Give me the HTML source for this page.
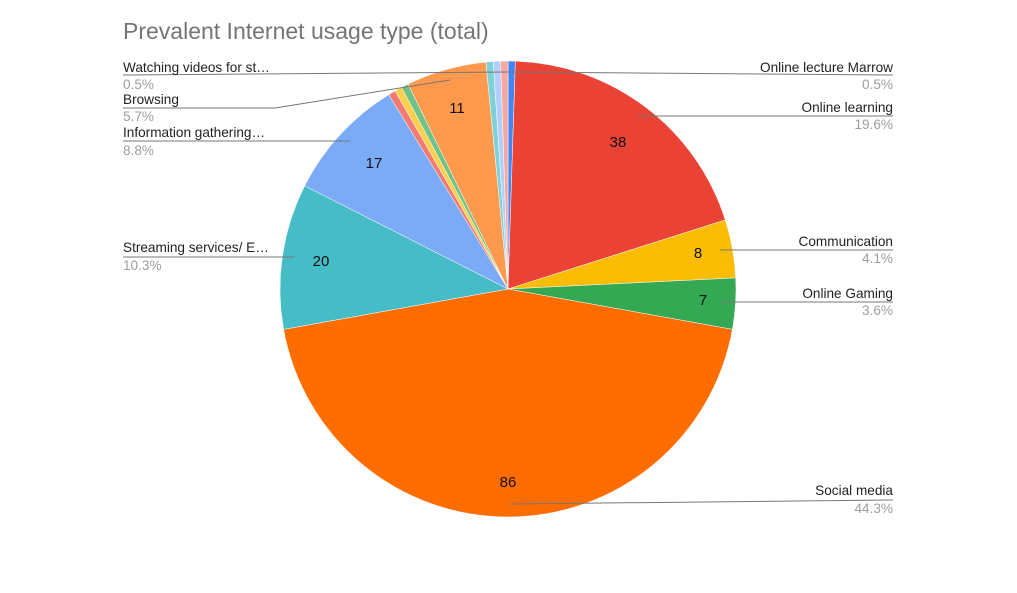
<!DOCTYPE html>
<html><head><meta charset="utf-8"><style>
html,body{margin:0;padding:0;background:#fff;width:1017px;height:593px;overflow:hidden}
svg{display:block;font-family:"Liberation Sans",sans-serif}
</style></head><body>
<svg id="s" width="1017" height="593" viewBox="0 0 1017 593">
<text x="123" y="39" font-size="23" fill="#757575">Prevalent Internet usage type (total)</text>
<g id="pie"></g>
<g stroke="#777" stroke-width="1" fill="none">
<polyline points="123,75 510,72"/>
<polyline points="893,75 512,72"/>
<polyline points="123,108 275,108 450,80"/>
<polyline points="123,141 350,141"/>
<polyline points="123,257 295,257"/>
<polyline points="893,116 638,116"/>
<polyline points="893,250 720,250"/>
<polyline points="893,302 722,302"/>
<polyline points="893,500 510,504"/>
</g>
<g font-size="13.6" fill="#222">
<text x="123" y="72">Watching videos for st…</text>
<text x="123" y="104">Browsing</text>
<text x="123" y="137">Information gathering…</text>
<text x="123" y="252">Streaming services/ E…</text>
<text x="893" y="72" text-anchor="end">Online lecture Marrow</text>
<text x="893" y="112" text-anchor="end">Online learning</text>
<text x="893" y="246" text-anchor="end">Communication</text>
<text x="893" y="298" text-anchor="end">Online Gaming</text>
<text x="893" y="495" text-anchor="end">Social media</text>
</g>
<g font-size="13.6" fill="#9e9e9e">
<text x="123" y="89">0.5%</text>
<text x="123" y="121">5.7%</text>
<text x="123" y="155">8.8%</text>
<text x="123" y="270">10.3%</text>
<text x="893" y="89" text-anchor="end">0.5%</text>
<text x="893" y="129" text-anchor="end">19.6%</text>
<text x="893" y="263" text-anchor="end">4.1%</text>
<text x="893" y="315" text-anchor="end">3.6%</text>
<text x="893" y="513" text-anchor="end">44.3%</text>
</g>
<g font-size="15" fill="#111" text-anchor="middle">
<text x="618" y="147">38</text>
<text x="698" y="258">8</text>
<text x="703" y="305">7</text>
<text x="508" y="487">86</text>
<text x="321" y="266">20</text>
<text x="374" y="168">17</text>
<text x="457" y="113">11</text>
</g>
</svg>
<script>
var d=[[1,"#4285f4"],[38,"#ea4335"],[8,"#fbbc04"],[7,"#34a853"],[86,"#ff6d01"],[20,"#46bdc6"],[17,"#7baaf7"],[1,"#f07b72"],[1,"#fcd04f"],[1,"#71c287"],[11,"#ff994d"],[1,"#7ed1d7"],[1,"#b3cefb"],[1,"#f7a7a0"]];
var cx=508,cy=289,r=228,t=194,a=-Math.PI/2,h="";
d.forEach(function(s){var b=a+s[0]/t*2*Math.PI;
var x1=cx+r*Math.cos(a),y1=cy+r*Math.sin(a),x2=cx+r*Math.cos(b),y2=cy+r*Math.sin(b);
h+='<path d="M'+cx+','+cy+'L'+x1.toFixed(2)+','+y1.toFixed(2)+'A'+r+','+r+' 0 '+((b-a)>Math.PI?1:0)+' 1 '+x2.toFixed(2)+','+y2.toFixed(2)+'Z" fill="'+s[1]+'" stroke="#fff" stroke-width="0.5"/>';a=b;});
document.getElementById("pie").innerHTML=h;
</script>
</body></html>
